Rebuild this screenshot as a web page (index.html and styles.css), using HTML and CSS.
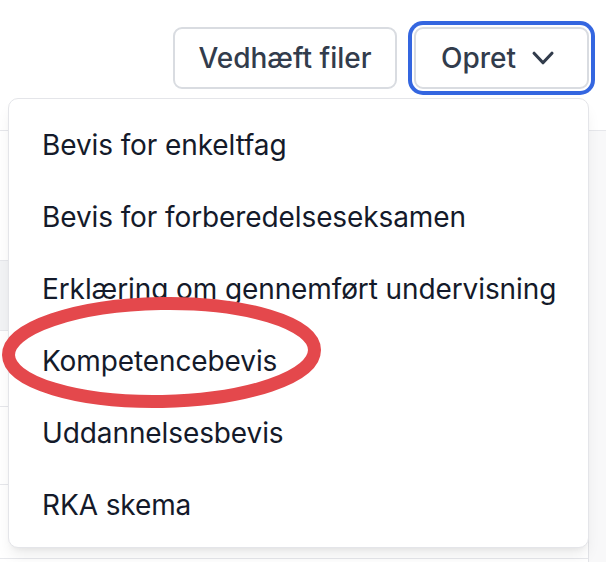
FILE: index.html
```html
<!DOCTYPE html>
<html lang="da">
<head>
<meta charset="utf-8">
<title>Opret</title>
<link rel="stylesheet" href="styles.css">
</head>
<body>
<div class="page">
  <div class="toolbar">
    <button class="btn btn-attach">Vedhæft filer</button>
    <button class="btn btn-create">Opret
      <svg class="chev" viewBox="0 0 20 20" aria-hidden="true"><path d="M5.23 7.21a.75.75 0 011.06.02L10 11.168l3.71-3.938a.75.75 0 111.08 1.04l-4.25 4.5a.75.75 0 01-1.08 0l-4.25-4.5a.75.75 0 01.02-1.06z"/></svg>
    </button>
  </div>
  <div class="table-wrap">
    <div class="table">
      <div class="row row-a"></div>
      <div class="row row-head"></div>
      <div class="row row-b"></div>
      <div class="row row-c"></div>
      <div class="row row-d"></div>
    </div>
    <div class="side"></div>
  </div>

  <ul class="menu">
    <li class="item">Bevis for enkeltfag</li>
    <li class="item">Bevis for forberedelseseksamen</li>
    <li class="item">Erklæring om gennemført undervisning</li>
    <li class="item">Kompetencebevis</li>
    <li class="item">Uddannelsesbevis</li>
    <li class="item">RKA skema</li>
  </ul>

  <svg class="circle" viewBox="0 0 330 130" aria-hidden="true">
    <ellipse cx="161.5" cy="62.5" rx="153" ry="49" transform="rotate(-1 161.5 62.5)"/>
  </svg>
</div>
</body>
</html>
```

FILE: styles.css
```css
* { box-sizing: border-box; }
html, body {
  margin: 0;
  padding: 0;
  background: #ffffff;
}
body {
  font-family: Inter, "Noto Sans", sans-serif;
  width: 606px;
  height: 562px;
  overflow: hidden;
}
.page {
  position: relative;
  width: 606px;
  height: 562px;
}
.toolbar {
  height: 130px;
  display: flex;
  justify-content: flex-end;
  align-items: flex-start;
  gap: 17px;
  padding: 27px 17px 0 0;
}
.btn {
  height: 62px;
  background: #ffffff;
  border: 2px solid #d9dce1;
  border-radius: 9px;
  font-family: Inter, "Noto Sans", sans-serif;
  font-size: 28px;
  font-weight: 500;
  color: #323c4c;
  display: flex;
  align-items: center;
  padding: 0;
  margin: 0;
}
.btn-attach {
  width: 224px;
  justify-content: center;
}
.btn-create {
  width: 175px;
  padding-left: 25px;
  box-shadow: 0 0 0 2px #ffffff, 0 0 0 6px #3466e0;
}
.chev {
  width: 42px;
  height: 42px;
  margin-left: 6px;
  fill: #323c4c;
}
.table-wrap {
  display: flex;
  border-top: 1px solid #e6e7eb;
  height: 432px;
}
.table {
  width: 589px;
  border-right: 1px solid #e3e4e8;
  display: flex;
  flex-direction: column;
}
.side {
  flex: 1;
  background: #f8f8f9;
}
.row {
  border-bottom: 1px solid #e6e7eb;
}
.row-a { height: 130px; }
.row-head { height: 70px; background: #f2f3f5; }
.row-b { height: 76px; }
.row-c { height: 78px; }
.row-d { height: 74px; }

.menu {
  position: absolute;
  top: 98px;
  left: 8px;
  width: 581px;
  height: 450px;
  margin: 0;
  padding: 10px 0 8px;
  list-style: none;
  background: #ffffff;
  border: 1px solid #e4e5e9;
  border-radius: 10px;
  box-shadow: 0 10px 15px -3px rgba(0,0,0,0.08), 0 4px 6px -4px rgba(0,0,0,0.08);
}
.item {
  height: 72px;
  display: flex;
  align-items: center;
  padding-left: 33px;
  font-size: 28px;
  font-weight: 400;
  letter-spacing: -0.1px;
  color: #141a2a;
  white-space: nowrap;
}
.circle {
  position: absolute;
  left: 0;
  top: 290px;
  width: 330px;
  height: 130px;
  overflow: visible;
}
.circle ellipse {
  fill: none;
  stroke: #e4484c;
  stroke-width: 13;
}
```
